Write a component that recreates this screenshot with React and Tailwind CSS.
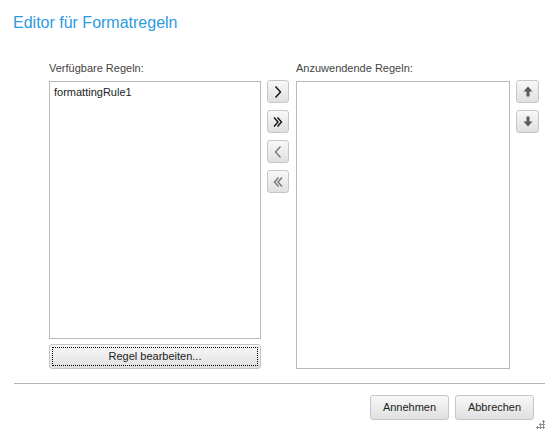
import React from "react";

const font = { fontFamily: '"Liberation Sans", Arial, sans-serif' };

const btn =
  "flex items-center justify-center border border-[#c6c6c6] rounded-[3px] bg-gradient-to-b from-[#f8f8f8] to-[#e0e0e0]";

const Chevron = ({ double, left, color }) => (
  <svg width="14" height="14" viewBox="0 0 14 14" fill="none" stroke={color} strokeWidth="1.4">
    <g transform={left ? "translate(14,0) scale(-1,1)" : undefined}>
      {double ? (
        <>
          <path d="M3 2.5 L7 7 L3 11.5" />
          <path d="M6.5 2.5 L10.5 7 L6.5 11.5" />
        </>
      ) : (
        <path d="M4.5 1.5 L9.5 7 L4.5 12.5" />
      )}
    </g>
  </svg>
);

const Arrow = ({ down }) => (
  <svg width="10" height="11" viewBox="0 0 10 11" fill="#5a5a5a">
    <g transform={down ? "translate(0,11) scale(1,-1)" : undefined}>
      <path d="M5 0.5 L9.5 5.5 L6.5 5.5 L6.5 10.5 L3.5 10.5 L3.5 5.5 L0.5 5.5 Z" />
    </g>
  </svg>
);

const Grip = () => (
  <svg width="14" height="14" viewBox="0 0 14 14" fill="#8a8a8a">
    {[
      [11, 2],
      [8, 5],
      [11, 5],
      [5, 8],
      [8, 8],
      [11, 8],
    ].map(([x, y]) => (
      <g key={`${x}-${y}`}>
        <rect x={x} y={y - 1} width="1" height="3" />
        <rect x={x - 1} y={y} width="3" height="1" />
      </g>
    ))}
  </svg>
);

export default function App() {
  return (
    <div className="w-[559px] h-[445px] bg-white relative text-[11px] text-[#333]" style={font}>
      <div className="pt-[13px] pl-[13px] h-[33px] text-[16px] leading-[20px] text-[#2d9be0]">
        Editor für Formatregeln
      </div>

      <div className="flex mt-[27px] pl-[49px]">
        {/* left */}
        <div className="w-[212px] flex flex-col">
          <div className="h-[16px] leading-[16px] text-[#444]">Verfügbare Regeln:</div>
          <div className="mt-[5px] h-[258px] border border-[#b8b8b8] px-[4px] pt-[3px] leading-[15px] text-[#222]">
            formattingRule1
          </div>
          <button
            className={`${btn} mt-[5px] h-[25px] w-[212px] text-[#222] outline-1 outline-dotted outline-black -outline-offset-4`}
          >
            Regel bearbeiten...
          </button>
        </div>

        {/* transfer buttons */}
        <div className="ml-[6px] mt-[20px] flex flex-col gap-[7px]">
          <div className={`${btn} w-[22px] h-[23px]`}>
            <Chevron color="#111" />
          </div>
          <div className={`${btn} w-[22px] h-[23px]`}>
            <Chevron double color="#111" />
          </div>
          <div className={`${btn} w-[22px] h-[23px]`}>
            <Chevron left color="#777" />
          </div>
          <div className={`${btn} w-[22px] h-[23px]`}>
            <Chevron left double color="#777" />
          </div>
        </div>

        {/* right */}
        <div className="ml-[7px] w-[214px] flex flex-col">
          <div className="h-[16px] leading-[16px] text-[#444]">Anzuwendende Regeln:</div>
          <div className="mt-[5px] h-[288px] border border-[#b8b8b8]" />
        </div>

        {/* order buttons */}
        <div className="ml-[6px] mt-[20px] flex flex-col gap-[7px]">
          <div className={`${btn} w-[23px] h-[23px]`}>
            <Arrow />
          </div>
          <div className={`${btn} w-[23px] h-[23px]`}>
            <Arrow down />
          </div>
        </div>
      </div>

      <div className="ml-[14px] mt-[14px] w-[531px] h-px bg-[#b4b4b4]" />

      <div className="flex justify-end gap-[6px] mt-[11px] pr-[25px]">
        <button className={`${btn} w-[79px] h-[25px] text-[#222]`}>Annehmen</button>
        <button className={`${btn} w-[79px] h-[25px] text-[#222]`}>Abbrechen</button>
      </div>

      <div className="absolute right-[13px] bottom-[12px]">
        <Grip />
      </div>
    </div>
  );
}
